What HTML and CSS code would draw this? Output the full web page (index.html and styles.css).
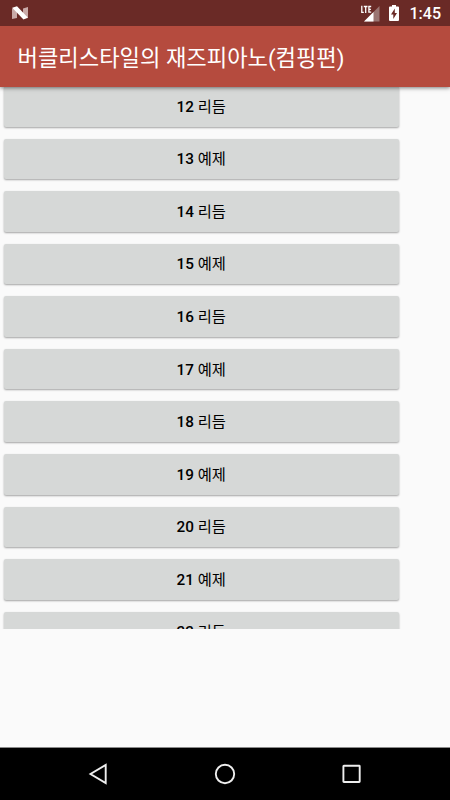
FILE: index.html
```html
<!DOCTYPE html>
<html lang="ko">
<head>
<meta charset="utf-8">
<title>버클리스타일의 재즈피아노(컴핑편)</title>
<link rel="stylesheet" href="styles.css">
</head>
<body>
<div class="screen">
  <div class="status">
    <svg class="logo" width="18" height="14" viewBox="0 0 18 14">
      <path d="M1 2.500 6 1v11L1 13zM12 2.500 17 1v11L12 13z" fill="#c9aaa8"/>
      <path d="M1.200 1.800 6 .2 16.800 11.500 12.500 13.600z" fill="#fff"/>
    </svg>
    <div class="indicators">
      <svg width="20" height="17" viewBox="0 0 20 17">
        <path d="M19.500 1v15.500H4z" fill="#9a7572"/>
        <path d="M13.500 7V16.500H4z" fill="#fff"/>
        <path d="M0 0h12.500v8H10L8 9H0z" fill="#6a2a26"/>
        <path d="M1.800 .8v6.500h2M3.800 1.500h3.700M5.700 1.500v6.400M11.200 1.500H8.900v5.700h2.300M8.900 4.300h2" fill="none" stroke="#fff" stroke-width="1.300"/>
      </svg>
      <svg class="battery" width="10" height="16" viewBox="0 0 10 16">
        <path d="M3 0h4v1.500h2q1 0 1 1V15q0 1-1 1H1q-1 0-1-1V2.500q0-1 1-1h2z" fill="#fff"/>
        <path d="M5.800 3.500 2 9.500h2.300V14L8 8H5.800z" fill="#6a2a26"/>
      </svg>
      <span class="clock">1:45</span>
    </div>
  </div>
  <header class="appbar"><h1>버클리스타일의 재즈피아노(컴핑편)</h1></header>
  <main class="list">
    <button>12 <span>리듬</span></button>
    <button>13 <span>예제</span></button>
    <button>14 <span>리듬</span></button>
    <button>15 <span>예제</span></button>
    <button>16 <span>리듬</span></button>
    <button>17 <span>예제</span></button>
    <button>18 <span>리듬</span></button>
    <button>19 <span>예제</span></button>
    <button>20 <span>리듬</span></button>
    <button>21 <span>예제</span></button>
    <button>22 <span>리듬</span></button>
  </main>
  <nav class="navbar">
    <svg width="22" height="22" viewBox="0 0 22 22"><path d="M18.700 2v18L3.500 11z"/></svg>
    <svg width="22" height="22" viewBox="0 0 22 22"><circle cx="11" cy="11" r="9.200"/></svg>
    <svg width="22" height="22" viewBox="0 0 22 22"><rect x="2.400" y="2.700" width="16.300" height="16.300" rx=".5"/></svg>
  </nav>
</div>
</body>
</html>
```
FILE: styles.css
```css
* { box-sizing: border-box; }
body { margin: 0; }
.screen {
  width: 450px;
  height: 800px;
  display: flex;
  flex-direction: column;
  overflow: hidden;
  background: #fafafa;
  font-family: Roboto, "Noto Sans CJK KR", sans-serif;
}
.status {
  flex: none;
  height: 26px;
  padding: 0 9px 0 11px;
  display: flex;
  align-items: center;
  justify-content: space-between;
  background: #6a2a26;
  color: #fff;
  position: relative;
  z-index: 2;
}
.indicators { display: flex; align-items: center; }
.battery { margin: 0 11px 0 9px; }
.clock {
  font-size: 16px;
  font-weight: 500;
  line-height: 26px;
  padding-top: 2px;
}
.appbar {
  flex: none;
  height: 61px;
  padding: 2px 0 0 17.5px;
  display: flex;
  align-items: center;
  background: #b54b3e;
  color: #fff;
  box-shadow: 0 1px 4px rgba(0, 0, 0, .5);
  position: relative;
}
h1 {
  margin: 0;
  font-size: 22.2px;
  font-weight: 400;
  line-height: 32px;
  white-space: nowrap;
}
.list {
  flex: none;
  height: 542px;
  padding-left: 4px;
  display: flex;
  flex-direction: column;
  gap: 12px;
  overflow: hidden;
}
button {
  flex: none;
  width: 394.5px;
  height: 40.55px;
  padding: .6px 0 0;
  border: 0;
  border-radius: 2px;
  background: #d6d8d7;
  box-shadow: 0 1px 2px rgba(0, 0, 0, .35);
  color: #000;
  font-family: inherit;
  font-size: 15.3px;
  font-weight: 500;
  line-height: 24px;
}
button span { font-weight: 400; }
button:first-child { margin-top: -.8px; }
.navbar {
  flex: none;
  height: 53px;
  margin-top: auto;
  padding: 0 87px;
  display: flex;
  align-items: center;
  justify-content: space-between;
  background: #000;
  border-top: 1px solid #8a8a8a;
}
.navbar svg { fill: none; stroke: #eee; stroke-width: 1.9; }
```
